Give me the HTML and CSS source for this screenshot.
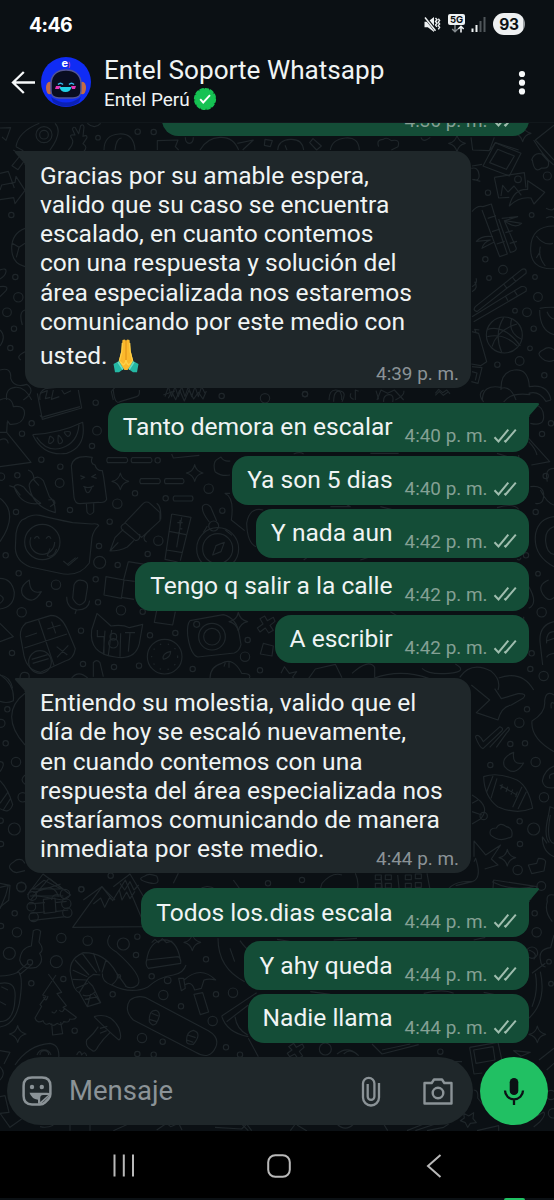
FILE: index.html
```html
<!DOCTYPE html>
<html lang="es">
<head>
<meta charset="utf-8">
<title>Entel Soporte Whatsapp</title>
<link rel="stylesheet" href="styles.css">
</head>
<body>
<svg class="defs" width="0" height="0">
  <symbol id="ticks" viewBox="0 0 24 16"><path d="M1.500 9.200l4 4.300L15.300 1.600M11.400 12.400l1.200 1.100L22.800 1.600" fill="none" stroke="#9fbdae" stroke-width="2"/></symbol>
  <symbol id="tail-out" viewBox="0 0 12 14"><path d="M0 0h9.500q2.500.3 1.200 2L1.500 12.500V14H0z" fill="#144d37"/></symbol>
  <symbol id="tail-in" viewBox="0 0 12 14"><path d="M12 0H2Q0 .3 1.200 2L10.500 12.500V14H12z" fill="#1f272a"/></symbol>
  <symbol id="spark" viewBox="-27 -27 54 54" overflow="visible"><path d="M0-25Q4-5 25 0Q5 4 0 25Q-5 5-25 0Q-4-4 0-25z"/></symbol>
</svg>
<div class="phone">
  <div class="status">
    <span class="clock">4:46</span>
    <div class="status-icons">
      <svg class="mute" width="18" height="18" viewBox="0 0 18 18"><path d="M1.500 5.700h3.300L11 1v15l-6.200-4.700H1.500z" fill="#eef1f2"/><path d="M2 1l12 15" stroke="#0b1014" stroke-width="3"/><path d="M2 1.500l10.500 13.200" stroke="#eef1f2" stroke-width="1.500"/><path d="M12.500 2l1.500 1.700-1.500 1.800L14 7.300l-1.500 1.800 1.500 1.800M15.300 2.700l1.300 1.700-1.300 1.800 1.300 1.700-1.300 1.700 1.300 1.700-1.300 2" fill="none" stroke="#eef1f2" stroke-width="1.400"/></svg>
      <div class="five-g"><span>5G</span><svg width="14" height="8" viewBox="0 0 14 8"><path d="M5 0v6.500M2.200 4L5 6.800 7.800 4" fill="none" stroke="#848a8e" stroke-width="1.400"/><path d="M11 7.500V1.300M8.300 4L11 1.300 13.700 4" fill="none" stroke="#eef1f2" stroke-width="1.600"/></svg></div>
      <svg class="signal" width="15" height="15" viewBox="0 0 15 15"><path d="M1.500 11.500V15M5.500 8v7" stroke="#eef1f2" stroke-width="2"/><path d="M9.500 4v11M13.500 0v15" stroke="#50565a" stroke-width="2"/></svg>
      <span class="battery">93</span>
    </div>
  </div>
  <header class="header">
    <svg class="back" width="25" height="25" viewBox="0 0 25 25"><path d="M24 12.500H2M12.800 2L2 12.500 12.800 23" fill="none" stroke="#f7f9fa" stroke-width="2.300"/></svg>
    <div class="avatar">
      <svg width="50" height="50" viewBox="0 0 50 50"><circle cx="25" cy="25" r="25" fill="#102cf5"/><path d="M10 40Q25 51 40 40L38 45Q25 54 12 45z" fill="#0b21b6"/><ellipse cx="8.500" cy="31" rx="3.500" ry="6.300" fill="#c46b45"/><ellipse cx="41.500" cy="31" rx="3.500" ry="6.300" fill="#c46b45"/><path d="M10 27C10 17 17 13 25 13s15 4 15 14v7c0 5-4 7-8 7H18c-4 0-8-2-8-7z" fill="#090d20" stroke="#535596" stroke-width="1.500"/><path d="M17 27.500q2.500-2.500 5 0M28 27.500q2.500-2.500 5 0" fill="none" stroke="#37b9e9" stroke-width="1.500"/><path d="M15 29h5l-2 3h-4zM30 29h5l-1 3h-3z" fill="#e435b5"/><path d="M18.500 30h12q-1 5-6 5t-6-5z" fill="#22d0e8"/></svg>
      <span class="brand">e<i>)</i></span>
    </div>
    <div class="who">
      <div class="name">Entel Soporte Whatsapp</div>
      <div class="sub">Entel Perú<svg width="24" height="24" viewBox="-12 -12 24 24"><circle r="10" fill="#16c253" /><circle r="10.100" fill="none" stroke="#16c253" stroke-width="2" stroke-dasharray="3.100 2.188" stroke-linecap="round"/><path d="M-4.800.2l3 3.300L5-3.900" fill="none" stroke="#fff" stroke-width="1.900"/></svg></div>
    </div>
    <svg class="more" width="8" height="26" viewBox="0 0 8 26" fill="#f7f9fa"><circle cx="4" cy="4" r="3.100"/><circle cx="4" cy="12.700" r="3.100"/><circle cx="4" cy="21.400" r="3.100"/></svg>
  </header>
  <main class="chat">
    <svg class="wallpaper" viewBox="0 123 554 1008" width="554" height="1008">
      <g transform="translate(0 0) scale(.33333)">
        <path d="M0 384l32-1-14 38-12-10M48 440Q55 395 118 370M48 440l22 12M165 370q25 25-15 80M205 450q20-22 10-35t10-10l-8-18q4-8 9-4l10 18 6-24q8-6 10 4l-3 28q12-6 12 4l-12 18q16 10 2 24M262 370q22 20 40 0M312 450q0-45 45-48t48 48M345 450q4-36 20-36M472 450v-28l62-2-8 20 10 10M600 450q20-36 60-38t56 38M712 430l48-10-32 30M795 418l22 4-6 18-18-4z"/>
        <circle cx="132" cy="404" r="24"/><circle cx="132" cy="404" r="13"/><circle cx="294" cy="413" r="7"/><circle cx="413" cy="395" r="8"/><circle cx="461" cy="396" r="8"/><path d="M556 412q0 18 12 18t12-18"/>
      </g>
      <g transform="translate(277 0) scale(.33333)">
        <path d="M2 450q2-30 38-32t40 32M160 450q5-32 45-36t42 36M30 450l-6-14M98 428l10-12 25 22-14 12zM305 440q-8-22 14-22 10-8 24 4 28-6 20 18l-20 10M432 412q6 18 28 0M582 412l5 38 50 2 15-40M640 450l15-22 70 22M775 420l56-44M775 420l56 60"/>
        <use href="#spark" x="513" y="403" width="54" height="54"/><use href="#spark" x="710" y="373" width="54" height="54"/>
      </g>
      <g transform="translate(0 140) scale(.33333)">
        <path d="M40 30l22 15-26 32 18 12 20-28M0 100l25-6 18 50M0 150l5-15 40-8 3-18 27 42-30 40-4-18-41 6M75 265q-40 15-40 60t40 55M37 310l20 12 18-12M57 322l-8 30M0 390q20-8 18 5t-18 22M0 440q28-4 18 12L0 470M75 510q-20 5-8 45M0 570q20 20 0 48M75 635q-30 15-12 25M0 690q35-10 32 25 10 30 48 18 30 20-10 47M20 780q-5-35 25-38t50 38M120 780q-4-25 15-34l50-5M340 780l-6-25 10-12M495 770l10-30 10 30 10-30 10 30 10-30 10 30 10-30 10 30 10-30 10 30 10-30 10 20"/>
        <circle cx="34" cy="225" r="8"/><circle cx="46" cy="411" r="8"/><circle cx="55" cy="472" r="14"/><circle cx="21" cy="517" r="13"/><circle cx="42" cy="566" r="8"/><circle cx="31" cy="624" r="8"/>
      </g>
      <g transform="translate(277 140) scale(.33333)">
        <path d="M655 8l77 32-35 68-79-30zM662 28l50 20-24 40-50-20zM652 112l90-14 5 45M652 112l13 62 32-2M672 168l5-32 16 20 18-18 22 28M697 198q12-52 55-50v-26l51 35-32 35-9-18q-35-5-65 24zM583 85q20-5 23 18t-20 15M590 118l20 6M770 0q30 50 60 75M764 60q8-24 30-18l20 22q5 24-20 20-22 18-28-24zM585 78l30-5M585 215q15-20 33-15l25-8q20 70 48 150l-23 8-53-140M632 235l25-8M645 275l24-8M659 312l24-8M674 235l48-5-38 12 50 8q-20 18-52-8l36 83q0 10-18 12l-35-100M685 278l22-6M698 310l22-6M648 290q-35-4-50 14l42-4q-20 6-25 25l38-20M807 205q20 10 24 0M807 234q20-8 24 0M831 258q-68 0-70 66t70 62M778 288q22 30 50 22M790 320q-8 30 15 58M778 354l12-20M595 500L735 388q15-5 12 12L600 515q-14-4-5-15M680 432l10 13M706 411l10 13M585 530L732 440q20-3 15 14L590 545M685 468l8 14M711 451l10 15M585 440q18-10 12-25M585 455q20-10 8-30M585 575l20 5 24 85-18 12-28-5M598 580l-5-12 14 2M585 680l30 3-12 47-20-5M585 695l15 4-5 22M788 505q20-4 43-3M788 510q0 62 43 74M810 515q8 20 21 22M795 655q-20-15 4-26 16-12 32 0M795 655q15 15 36 6M672 750q-2-55 40-60t45 50q55-10 65 40M672 742q-55-10-56 38M672 745q28-10 45 35"/>
        <circle cx="682" cy="585" r="54"/><path d="M632 568q50-15 98 50M645 620q15-50 75-68M680 532q-30 50-6 105M704 537q-12 40 28 60M631 590q50-12 90 28"/>
        <circle cx="723" cy="118" r="10"/><circle cx="633" cy="158" r="8"/><circle cx="811" cy="108" r="12"/><circle cx="764" cy="225" r="7"/><circle cx="625" cy="358" r="8"/><circle cx="678" cy="389" r="13"/><circle cx="636" cy="414" r="7"/><circle cx="774" cy="411" r="7"/><circle cx="783" cy="471" r="13"/><circle cx="714" cy="512" r="7"/><circle cx="750" cy="517" r="13"/><circle cx="770" cy="566" r="8"/><circle cx="759" cy="625" r="7"/><circle cx="728" cy="663" r="13"/><circle cx="661" cy="674" r="8"/><circle cx="802" cy="706" r="8"/><circle cx="84" cy="762" r="8"/>
        <path d="M156 780q0-30 20-30t18 30M235 780v-30l10 4M300 780l12-30 20 10 20-10 28 30M475 760l10-12 12 10 12-8 10 12"/>
      </g>
      <g transform="translate(0 390) scale(.33333)">
        <path d="M0 30q35-15 40 20 38-5 33 25-5 30-43 28L22 92M22 95l-2 32L93 217 0 230M0 127h20M0 150q20-10 25 10M112 10l15 78 118-34-10-54M120 76q5 8 12 4l108-30M120 10l22-8-6 24 15-4M160 0l-6 28 24-8M185 0l8 12 20-10M340 0q4 45 20 35l50-15q10-2 8-20M490 15q20-8 35-12M505 25l10-20 12 24 12-28 14 32 14-32 14 26 14-20 14 20 10-24M98 134Q180 130 248 97 260 170 200 190 130 200 98 134M110 142q30 45 75 32 48-15 52-70"/>
        <path d="M150 138q20 10 5 20t-5-20M175 135q20 18 8 25t-8-25M192 126q25-5 18 8t-18-8M222 322l-8-95q5-28 45-27l18 2q-8 18 8 23 5 18 22 17l4 20 9 66q-5 12-25 9l-55 4q-15 0-18-19zM241 257l13 5-12 6M288 253l-13 7 15 5M250 289q15 8 32-2M254 291q8 35 22-1M259 340l2 26q8 15 20 0v-28M323 203h56q8 8 0 15h-56q-5-7 0-15M396 203h56q8 8 0 15h-56q-5-7 0-15M422 266h55q8 8 0 15h-55q-5-7 0-15M496 266h52q8 8 0 15h-52q-5-7 0-15M522 318h54q6 7 0 15h-54q-5-7 0-15M42 290q20 60 80 50-38-30-50-48-20-15-30-2M28 287l15 5 18 24M88 290q10 60 78 78 0-35-18-48l-18-48q-15-18-30-5t-12 23M84 240q18 5 18 30l15 17M145 330q20-5 20 10l-15 10"/>
        <path d="M0 325q58 45 0 130M75 386Q55 390 48 430l-2 45q2 40 45 56l85 18q60 15 92-30l8-77q5-22 20-35-3-8-20-5l-58-4Q160 386 120 376q-26-4-45 10z"/><circle cx="127" cy="456" r="53"/><circle cx="127" cy="456" r="37" stroke-dasharray="130 102"/><path d="M103 446q9-14 15 0M138 446q9-14 15 0M150 475l-8 22q18 8 28-20M190 513l12 10 25-20M202 524l4 2 28-24"/>
        <path d="M375 398l55-58q10-8 20 0l30 28v24l-55 50zM375 400q-18 8-8 20l40 32q15-2 12-20M370 418l-25 25-15 40q30 0 52-12l20-20M330 483l25-26M470 340q15 10 12 48M450 420q-30 25-10 36M515 372l58 10-32 130M515 372l-20 136 38 8M508 424l50 10M500 480l48 8M545 382l-15 90M540 390v22q0 6 7 4M532 398h16"/>
        <circle cx="641" cy="408" r="15"/><circle cx="653" cy="476" r="63"/><circle cx="653" cy="476" r="45"/><path d="M628 396q-25-30-20-48 10-12 24 3l18 42M638 495l10-28 25-10-10 28zM610 428l12-20M676 420l20 16M645 245q-8-30 8-38l10-6q8 15 28 12M645 245q20 15 45 10M674 310q30 12 20 80l40 32M690 310l-16 0M790 360q-42-10-50 40 2 60 28 70M515 192l5 12 78-8"/>
        <path d="M0 565q35 0 43 42 0 45-43 50M0 615q20 12 0 25M88 570q-32 20-20 45 30 35 56-10-35 10-36-35zM218 625l4-40q8-20 28-13 15 5 12 22l-6 38q-20 28-38-7M200 620q0 35 32 40 34 0 37-28M229 660l-4 12M318 560l54 10-8 55-52-10zM385 515l50 8M385 515l-14 54M364 622l38 6M372 570l32 4M470 662l-7 35 55 8 8-40M75 700l78-24q30 0 48 40l25 60q-5 32-30 37l-74 34q-40-5-50-50l-11-60q0-25 17-37zM116 690l46 136M73 774l128-42M76 741l35-12M142 717l40-12M155 695l12 35M170 770l32 25M205 766l-34 36M95 808l48-14M98 820l48-14"/><circle cx="120" cy="816" r="34"/>
        <path d="M275 720l16-50 42 38q35-5 55 5l40-10-10 58q-12 50-72 40-80-10-71-81M292 720v20h20v55M315 722l-5 70M335 720l-10 75M362 730l-2 70M390 730l-5 55M375 728h30"/><circle cx="340" cy="740" r="10"/><circle cx="340" cy="760" r="14"/><circle cx="494" cy="800" r="52"/><circle cx="494" cy="800" r="39" stroke-dasharray="4 20"/><path d="M490 808q-5-18 22-24 0 20-22 24M280 860v-42q10-12 20 0l10 42M570 692l100-18q40 10 48 60l5 30q-5 20-20 25l-110 12q-22-8-30-65-3-32 7-44"/><circle cx="636" cy="740" r="40"/><circle cx="636" cy="740" r="25"/><circle cx="590" cy="703" r="9"/><path d="M630 865q0-35 35-45 35-20 60 30 35 0 20 20M672 830l4-12M687 833V813M780 686l14-8 8 14 18-10 5 12-15 12 10 15-14 8-10-15-16 12-8-12 17-12zM790 760l30 8-4 30-35-6z"/>
        <path d="M0 700l40 40-40 15M0 855q30 4 38 40M60 864q0-18 15-17t12 17M215 864q20-25 48 0"/>
        <use href="#spark" x="334" y="247" width="54" height="54"/><use href="#spark" x="557" y="222" width="54" height="54"/><use href="#spark" x="685" y="665" width="60" height="60"/>
        <g><circle cx="287" cy="38" r="8"/><circle cx="95" cy="100" r="8"/><circle cx="66" cy="131" r="8"/><circle cx="291" cy="122" r="13"/><circle cx="276" cy="168" r="8"/><circle cx="124" cy="209" r="8"/><circle cx="181" cy="230" r="8"/><circle cx="179" cy="279" r="13"/><circle cx="52" cy="256" r="8"/><circle cx="3" cy="260" r="11"/><circle cx="473" cy="211" r="8"/><circle cx="405" cy="310" r="8"/><circle cx="497" cy="325" r="8"/><circle cx="626" cy="296" r="14"/><circle cx="352" cy="341" r="14"/><circle cx="210" cy="360" r="8"/><circle cx="329" cy="395" r="8"/><circle cx="48" cy="366" r="8"/><circle cx="667" cy="362" r="8"/><circle cx="475" cy="452" r="14"/><circle cx="443" cy="492" r="8"/><circle cx="297" cy="468" r="8"/><circle cx="299" cy="517" r="18"/><circle cx="353" cy="525" r="8"/><circle cx="17" cy="496" r="8"/><circle cx="56" cy="550" r="8"/><circle cx="168" cy="584" r="14"/><circle cx="287" cy="568" r="8"/><circle cx="147" cy="642" r="8"/><circle cx="294" cy="637" r="8"/><circle cx="65" cy="667" r="14"/><circle cx="363" cy="661" r="14"/><circle cx="428" cy="665" r="8"/><circle cx="243" cy="722" r="8"/><circle cx="450" cy="736" r="8"/><circle cx="526" cy="729" r="8"/><circle cx="36" cy="789" r="8"/><circle cx="249" cy="822" r="8"/><circle cx="342" cy="831" r="8"/><circle cx="417" cy="827" r="8"/><circle cx="578" cy="837" r="8"/><circle cx="735" cy="800" r="14"/><circle cx="743" cy="750" r="8"/><circle cx="780" cy="841" r="8"/><circle cx="795" cy="25" r="14"/><circle cx="665" cy="18" r="8"/></g>
      </g>
      <g transform="translate(277 390) scale(.33333)">
        <path d="M170 35q0-35 20-32t5 32M230 28q-15-5-8-18M305 28l-8-26M320 36q-2-20 15-22t12 22M355 30q30-15 25-28M475 16l12-12 12 12 14-10M620 36q-20-25 0-36M680 36q20-30 80-22M755 10q30-10 52 24l15-4M760 100q40 10 40-20t-25-35M755 145l63 70-55 10M755 155q20 20 25 40M831 235q-30 0-20 40M760 290q40-5 40 25t-25 25M790 300q20 40 41 45M831 380q-45 5-55 50-10 65 55 100M831 410q-28 10-25 45t25 38M815 570q-35 15-18 42t34 10M755 590q30 50 0 65M831 695q-45 10-42 60l8 70M831 725q-25 0-22 35M831 745l-22 8M831 790q-20 3-22 12M12 850l10-20 15 20 22-5-12 16 18 20M95 865l20-28 60-14 20 40M225 850q50-45 68-18v30M290 865q80-30 165 0M435 835q20 20 80 15t20-28M548 862q35-50 95-18 30 25 20 56M665 864q70-25 105 36"/><path d="M50 192q18-8 30 0M280 190h85M660 190l65 20v-15M160 350h60l-20-12M310 350l60 15M660 353q50-15 65 5M80 510l20-15M250 510l30-10M720 508q10 5 12-5M740 680v20M340 665l20 12"/>
        <circle cx="84" cy="13" r="8"/><circle cx="795" cy="132" r="8"/><circle cx="822" cy="100" r="8"/><circle cx="806" cy="258" r="8"/><circle cx="776" cy="366" r="8"/><circle cx="783" cy="551" r="7"/><circle cx="794" cy="667" r="14"/><circle cx="764" cy="790" r="8"/><circle cx="760" cy="837" r="8"/><circle cx="800" cy="858" r="14"/><circle cx="747" cy="496" r="8"/>
      </g>
      <g transform="translate(0 670) scale(.33333)">
        <path d="M0 14q45 30 40 78-20 10-40 2M75 70q-40 30-40 70t40 85M0 275q20 0 0 30M75 315q-18 15 0 28M0 332q25 25 38 72-10 30-38 12M25 365L0 400M32 385l-22 35M75 580l-8-10q-15-5-25 5-18 10-12 20t20 13l25-6M0 640l30 6-4 45-26 20M92 690l55-65 65 50-25 15-90-15M100 668l82-26M115 660q50-20 60 20M155 690q0-20 25-15M250 690l55-40 40 40M340 650l50-38 45 75M360 640l14 20 16-25 12 25 14-15M435 618q10-10 35 0 15 30-25 20t-10-20M520 640l15-30M570 690q50-80 105-2M700 630l40 55"/>
        <circle cx="22" cy="118" r="8"/><circle cx="3" cy="160" r="12"/><circle cx="17" cy="220" r="8"/><circle cx="48" cy="276" r="14"/><circle cx="68" cy="382" r="14"/><circle cx="2" cy="452" r="8"/><circle cx="43" cy="477" r="18"/><circle cx="3" cy="522" r="8"/><circle cx="64" cy="652" r="14"/><circle cx="244" cy="658" r="8"/><circle cx="332" cy="617" r="8"/><circle cx="804" cy="640" r="8"/>
      </g>
      <g transform="translate(277 670) scale(.33333)">
        <path d="M583 45l55 45-40 38 65 22q10-40 40-45l35-20q15-15-15-14l-50 15-20-30M595 200q10-12 24 15l50-45q12 5 5 13l-56 53q-10-2-23-36M638 232l55-60q10 4-5 18l-30 42M831 75q-25-15-28 18 4 35-38 60-5 52 66 92M831 100q-12-8-8 15M710 247q-38 15-28 42 30 35 58-10-36 8-30-32zM620 320q42-15 100 10 35 20 47 85-50 20-105-5-40-30-42-90zM648 318l-20 50M660 325l-18 60M735 350l-28 62M748 365l-25 52M668 345l52 30M676 342l-5 16M692 350l-5 16M707 358l-5 16M721 365l-5 16M831 288q-30 12-35 45 5 25 35 20M831 310q-18 3-12 16M585 375q60 35 25 72l-25 15M585 425l30 10M585 400l18-10M640 494q-5-20 18-20 10-20 30-4 22 5 16 30-38 20-64-6M831 415l-12-5-5 28q-15 60 3 80M820 435q-15 80 11 85M796 500q0 45 35 60M796 500l14 20M754 585l25-5 5-15q20 0 22 10l-5 28-37 8zM591 575l5-10q20 60-10 70l-50 12M591 560v-47l35 42 45-30-28 42 20 18-40 12M370 690l-8-75M320 690l-8-70M120 690l15-50q30-35 60-25M235 610q20 45-10 80M450 610l15 80M500 690q10-60 85-55M645 690l5-60 130 20-20 40M645 635q60 30 125 15"/>
        <path d="M295 615h18v14h-18zM325 615h18v14h-18zM295 640h18v14h-18zM325 640h18v14h-18zM385 615h18v14h-18zM415 612h18v14h-18zM385 640h18v14h-18zM415 638h18v14h-18z"/>
        <use href="#spark" x="664" y="536" width="54" height="54"/><circle cx="620" cy="438" r="11"/><circle cx="750" cy="118" r="8"/><circle cx="727" cy="158" r="14"/><circle cx="700" cy="222" r="8"/><circle cx="744" cy="220" r="8"/><circle cx="640" cy="285" r="8"/><circle cx="776" cy="276" r="14"/><circle cx="801" cy="382" r="14"/><circle cx="728" cy="454" r="8"/><circle cx="770" cy="477" r="18"/><circle cx="729" cy="522" r="8"/><circle cx="722" cy="600" r="14"/><circle cx="793" cy="648" r="13"/><circle cx="75" cy="630" r="8"/>
      </g>
      <g transform="translate(0 880) scale(.33333)">
        <path d="M0 22l25-6-8 30-17 40M82 45l12-18h95l-60-45-47 63M100 26l32-25 50 25M90 48h100M85 72l50-4M90 100l45-4M165 68l35-4M165 95l40-5M130 58l35-4 3 42-36 4zM92 122l105-12M218 142L306 20l32 42 38-62 60 140zM280 72l22-18 12 28 14-28 10 6M358 30l8 30 14-24 10 20 15-22M100 152q15-8 22 2l-5 32q18 24 2 34 15 25-10 42-42 10-50-22 5-38 35-42z"/><circle cx="90" cy="247" r="8"/><path d="M0 288q30 0 56-12 15 15 2 95-15 65-58 70M50 278l35-30M58 285l38-32M0 310q50-10 45 45-2 70-45 70M4 320l20 10M0 365l18 10M145 282l40 55-14 4 28 36-10 5 40 30q-5 8-20 5 0 12-18 8-5 15-20 5-12 12-22 0-15 8-20-8-18 10-24-8l20-35-5-5 18-25-10-4 40-60M155 430l3 35 30-4-6-35M130 350q8 20 14-2M155 395q10 10 15-5M178 390q10 12 15-4"/>
        <path d="M216 300q-20-60 35-82 65 0 98 60l30 42M216 300q5 30 22 38M245 218l45 60M225 240l42 45M218 270l44 20M218 298l42 2M228 325l36-15M280 219l20 55M318 240l-12 38M350 280q10 15-15 35-30-10-28-35M238 338l28-45 15-10 20 2M238 338l24 42 40-12-24-50-14-14M248 345q20 8 38-10M254 358l40-8M262 380l10-38M300 366l-18-24M330 165q-20 30 18 50 85 75 65 100-18 15-38 3M335 315q60 30 110 5 30-28 75-35 30-5 38-30"/><circle cx="357" cy="289" r="5"/>
        <path d="M440 240q8-55 48-60t52 54M440 240q-5 15 5 25l97-15q2-15-7-20zM455 188l10-10 10 10 12-12 12 12 18-5M536 295h15l5 30-12 7zM552 300q50-45 95 0-20-5-35 0l-8 25-20 5q-10-30-30-15M582 343l26-5 18 58-25 8zM282 410q50-15 75 35 10 30 0 35-20-15-75-70M295 440q-12 20-35 40-5 20 15 30 10 10 20-12 15-22 35-40M300 445l22-6M300 460l20-8M390 360q20-15 45-8l190 100q35 20 22 50-18 40-60 15L400 420q-30-30-10-60M448 425q-2-35 20-34 20 8 0 40-10 10-20-6M455 400l20 8M448 418l22 7M560 485q-2-30 20-34 28 8 0 42-20 0-20-8M563 465l24 8M560 480l20 7M654 175q0 90 80 130M720 182q35 50 40 12M690 205l14 40M665 408l105-70M665 408q15 50 80 62M680 425l65-50M705 410q5 38 38 55M745 475l30 55"/>
        <path d="M0 512l30 5-18 35M0 560q20 20 0 40M45 555q40-60 105-65 35 5 24 60M111 525a22 22 0 0142 0M120 525a13 13 0 0126 0M230 525q10-20 15 0 10-15 15 3M0 650l15-3 12 50L0 700M0 700l30 42 35-25M120 740q20 5 40-4M210 732v20M270 732v20M470 750l30-20 12 10 24-10 10 20M645 742l80 5 15-15 15 20M725 732l20 20M340 752l45-20"/>
        <use href="#spark" x="26" y="435" width="54" height="54"/><use href="#spark" x="550" y="160" width="54" height="54"/>
        <circle cx="97" cy="48" r="13"/><circle cx="94" cy="80" r="13"/><circle cx="101" cy="111" r="14"/><circle cx="195" cy="42" r="14"/><circle cx="199" cy="71" r="14"/><circle cx="202" cy="98" r="14"/><circle cx="64" cy="20" r="14"/><circle cx="244" cy="28" r="8"/><circle cx="44" cy="100" r="8"/><circle cx="3" cy="138" r="8"/><circle cx="51" cy="157" r="14"/><circle cx="184" cy="174" r="14"/><circle cx="263" cy="182" r="14"/><circle cx="370" cy="192" r="18"/><circle cx="412" cy="170" r="8"/><circle cx="28" cy="220" r="18"/><circle cx="169" cy="245" r="18"/><circle cx="94" cy="310" r="8"/><circle cx="190" cy="297" r="8"/><circle cx="338" cy="343" r="8"/><circle cx="408" cy="225" r="8"/><circle cx="455" cy="289" r="8"/><circle cx="503" cy="301" r="10"/><circle cx="490" cy="345" r="14"/><circle cx="543" cy="379" r="8"/><circle cx="618" cy="238" r="8"/><circle cx="648" cy="343" r="8"/><circle cx="699" cy="338" r="14"/><circle cx="638" cy="423" r="14"/><circle cx="224" cy="452" r="8"/><circle cx="426" cy="474" r="14"/><circle cx="488" cy="485" r="8"/><circle cx="412" cy="522" r="8"/><circle cx="461" cy="524" r="8"/><circle cx="678" cy="502" r="8"/><circle cx="720" cy="524" r="8"/>
      </g>
      <g transform="translate(277 880) scale(.33333)">
        <path d="M831 45q-25-5-20 20-10 30 15 60M831 165l-10 38q-40 5-30 40 0 15 15 18M765 280l40-30M790 275q20 90-35 140M775 280q10 50-10 100M755 210q30 10 15 28M35 500l15-10 8 12 18-10 5 10-14 12 10 14-14 8-10-14-15 8-7-10 14-10zM285 492l30 30 110-28M315 510l85-18M200 522q20-20 45 5M180 522q30-25 60 0M578 502l85-15 12 55M578 502l13 80 25-3M590 510l58-10 6 40-57 10zM530 545l25 0M710 512l50 5-28 12zM831 505l-45 35M831 550l-22 20M590 630q15 0 12 24l20 25M560 700l15 8 15-10-2 18 10 12-18 2-8 12-7-14-15-6 12-8zM760 720l40-24q8 8-12 30l-18 15M40 752l15-20M60 735l30 18M180 732q25 25 50 0M320 732l12 20M390 752l50-20M415 752l60-20M450 752l50-10 15-10M600 752l65-15v15M0 178l50 8M170 180l70-5M590 180l35-8M100 335l60 8M440 340q60-15 90 0M620 337l40 8"/>
        <use href="#spark" x="754" y="436" width="54" height="54"/><circle cx="145" cy="507" r="18"/><circle cx="490" cy="515" r="8"/><circle cx="773" cy="100" r="8"/><circle cx="779" cy="157" r="14"/><circle cx="816" cy="245" r="7"/><circle cx="822" cy="311" r="7"/><circle cx="765" cy="218" r="17"/><circle cx="822" cy="645" r="14"/><circle cx="828" cy="700" r="14"/>
      </g>
    </svg>
    <div class="messages">
      <div class="bubble out clipped"><span class="time">4:36 p. m.</span><svg class="ticks" width="24" height="16"><use href="#ticks"/></svg></div>
      <div class="bubble in first"><svg class="tail" width="12" height="14"><use href="#tail-in"/></svg><p>Gracias por su amable espera,<br>valido que su caso se encuentra<br>escalado, en cuanto contemos<br>con una respuesta y solución del<br>área especializada nos estaremos<br>comunicando por este medio con<br><span class="last">usted. <svg class="pray" width="26" height="34" viewBox="0 0 26 34" role="img" aria-label="🙏"><path d="M9.500 1q3-1.500 3.500 1 .5-2.500 3.500-1l1 10 3 12.500-6 7.500h-3l-6-7.500L8.500 11z" fill="#fbb92c"/><path d="M13 2v19" stroke="#d98513" stroke-width=".8"/><path d="M9.300 4L8.800 13l-2.500 9 4 4q3-2 2.500-5M16.700 4l.5 9 2.500 9-4 4q-3-2-2.500-5" fill="none" stroke="#ffd149" stroke-width="1.200"/><path d="M.5 25l5.500-3 4.500 8L6 33.300H2zM25.500 25L20 22l-4.500 8 4.500 3.300h4z" fill="#25b8a4"/><path d="M5 23l5 7.500M21 23l-5 7.500" stroke="#6bdcc2" stroke-width="1.500"/></svg></span></p><span class="time">4:39 p. m.</span></div>
      <div class="bubble out lead"><svg class="tail" width="12" height="14"><use href="#tail-out"/></svg><p>Tanto demora en escalar</p><span class="time">4:40 p. m.</span><svg class="ticks" width="24" height="16"><use href="#ticks"/></svg></div>
      <div class="bubble out"><p>Ya son 5 dias</p><span class="time">4:40 p. m.</span><svg class="ticks" width="24" height="16"><use href="#ticks"/></svg></div>
      <div class="bubble out"><p>Y nada aun</p><span class="time">4:42 p. m.</span><svg class="ticks" width="24" height="16"><use href="#ticks"/></svg></div>
      <div class="bubble out"><p>Tengo q salir a la calle</p><span class="time">4:42 p. m.</span><svg class="ticks" width="24" height="16"><use href="#ticks"/></svg></div>
      <div class="bubble out"><p>A escribir</p><span class="time">4:42 p. m.</span><svg class="ticks" width="24" height="16"><use href="#ticks"/></svg></div>
      <div class="bubble in second"><svg class="tail" width="12" height="14"><use href="#tail-in"/></svg><p>Entiendo su molestia, valido que el<br>día de hoy se escaló nuevamente,<br>en cuando contemos con una<br>respuesta del área especializada nos<br>estaríamos comunicando de manera<br>inmediata por este medio.</p><span class="time">4:44 p. m.</span></div>
      <div class="bubble out lead"><svg class="tail" width="12" height="14"><use href="#tail-out"/></svg><p>Todos los.dias escala</p><span class="time">4:44 p. m.</span><svg class="ticks" width="24" height="16"><use href="#ticks"/></svg></div>
      <div class="bubble out"><p>Y ahy queda</p><span class="time">4:44 p. m.</span><svg class="ticks" width="24" height="16"><use href="#ticks"/></svg></div>
      <div class="bubble out"><p>Nadie llama</p><span class="time">4:44 p. m.</span><svg class="ticks" width="24" height="16"><use href="#ticks"/></svg></div>
    </div>
    <div class="composer">
      <div class="field">
        <svg width="30" height="30" viewBox="0 0 30 30"><path d="M10 1.600h10q8.400 0 8.400 8.400v8q0 3-2 5l-3.500 3.500q-2 1.900-5 1.900H10Q1.600 28.400 1.600 20V10q0-8.400 8.400-8.400z" fill="none" stroke="#8b9397" stroke-width="2.500"/><circle cx="10" cy="11" r="2.200" fill="#8b9397"/><circle cx="19.800" cy="11" r="2.200" fill="#8b9397"/><path d="M7.500 16.800h16q5-.2 5 1l-3 4-6.500 6h-3v-4q-6.500-1-8.500-7z" fill="#8b9397"/><path d="M18.200 26v-4q0-3 3-3h5l-8 7z" fill="#1f272a"/></svg>
        <span class="placeholder">Mensaje</span>
        <svg width="20" height="31" viewBox="0 0 20 31"><path d="M18 7v14.500a8 8 0 01-16 0V7.500a5.700 5.700 0 0111.400 0v13a3.300 3.300 0 01-6.700 0V8" fill="none" stroke="#8b9397" stroke-width="2.300"/></svg>
        <svg class="camera" width="30" height="27" viewBox="0 0 30 27"><path d="M1.500 5h7.200l2.300-3.500h8L21.300 5h7.200v20.500h-27z" fill="none" stroke="#8b9397" stroke-width="2.400" stroke-linejoin="round"/><circle cx="15" cy="15" r="5.300" fill="none" stroke="#8b9397" stroke-width="2.400"/></svg>
      </div>
      <div class="mic"><svg width="22" height="29" viewBox="0 0 22 29"><rect x="6.700" y="1" width="8.600" height="17" rx="4.300" fill="#0b1014"/><path d="M2 13.500a9 8.800 0 0018 0M11 22v6" fill="none" stroke="#0b1014" stroke-width="2.300"/></svg></div>
    </div>
  </main>
  <nav class="nav">
    <svg width="22" height="23" viewBox="0 0 22 23"><path d="M1.500 .5v22M10.800 .5v22M20 .5v22" stroke="#b9b9b9" stroke-width="2"/></svg>
    <svg class="home" width="24" height="24" viewBox="0 0 24 24"><rect x="1.200" y="1.200" width="21.600" height="21.600" rx="7" fill="none" stroke="#b9b9b9" stroke-width="2"/></svg>
    <svg width="16" height="24" viewBox="0 0 16 24"><path d="M14.500 1L2 12l12.500 11" fill="none" stroke="#b9b9b9" stroke-width="2"/></svg>
  </nav>
  <div class="edge"><span></span></div>
</div>
</body>
</html>
```

FILE: styles.css
```css
* { box-sizing: border-box; }
body { margin: 0; background: #0b1014; font-family: Roboto, sans-serif; color: #f0f4f4; }
svg { display: block; flex: none; }
p { margin: 0; }
.defs { position: absolute; }
.phone { width: 554px; height: 1200px; display: flex; flex-direction: column; overflow: hidden; }

.status { height: 50px; display: flex; justify-content: space-between; padding: 13px 28px 0 29px; }
.clock { font: 700 19.500px/25px Inter, sans-serif; letter-spacing: -.6px; color: #fff; }
.status-icons { display: flex; align-items: flex-start; }
.mute { margin: 3px 7px 0 0; }
.five-g { width: 17px; margin: 1px 6px 0 0; display: flex; flex-direction: column; align-items: center; }
.five-g span { width: 17px; height: 11px; border-radius: 2px; background: #eef1f2; color: #0b1014; font: 700 9.5px/11px Inter, sans-serif; text-align: center; }
.signal { margin: 4px 7px 0 0; }
.battery { width: 32px; height: 22px; margin-right: 1px; border-radius: 11px; background: linear-gradient(90deg, #eef0f1 93%, #9a9fa2 93%); color: #0b1014; font: 700 15.500px/23px Inter, sans-serif; letter-spacing: -.3px; text-align: center; }

.header { height: 73px; display: flex; padding: 0 28px 0 11px; border-bottom: 1px solid #11171b; }
.back { margin: 20px 5px 0 0; }
.avatar { position: relative; width: 50px; height: 50px; margin: 7px 13px 0 0; }
.brand { position: absolute; left: 20.500px; top: 0; font: 700 11px/12px Inter, sans-serif; color: #fff; }
.brand i { font-style: normal; font-weight: 400; font-size: 7px; color: #ee5555; }
.who { flex: 1; white-space: nowrap; }
.name { font-size: 26.150px; line-height: 32px; margin-top: 4px; }
.sub { display: flex; align-items: center; font-size: 19px; line-height: 23px; height: 24px; margin-top: 1px; }
.sub svg { margin-left: 3px; }
.more { margin: 20px 0 0; }

.chat { position: relative; height: 1008px; overflow: hidden; display: flex; flex-direction: column; }
.wallpaper { position: absolute; inset: 0; fill: none; stroke: #1f262a; stroke-width: 3.500; stroke-linejoin: round; }
.messages { position: relative; height: 934px; padding: 0 25px; display: flex; flex-direction: column; align-items: flex-start; }
.bubble { position: relative; flex: none; display: flex; border-radius: 16px; font-size: 24.550px; line-height: 29.300px; white-space: nowrap; }
.out { align-self: flex-end; height: 48.900px; margin-bottom: 4px; padding: 9.200px 12px 0 15px; background: #144d37; }
.out .time { margin: 12.200px 0 0 12px; color: #84a094; }
.ticks { margin: 15.500px 0 0 5.500px; }
.time { font-size: 18.900px; line-height: 23px; color: #8b9397; }
.clipped { width: 367px; margin: -35.700px 0 14.800px; justify-content: flex-end; }
.in { width: 446px; padding: 9.500px 12px 0 15px; flex-direction: column; background: #1f272a; }
.in .time { position: absolute; right: 12px; bottom: 3px; }
.first { height: 237px; margin-bottom: 15px; border-top-left-radius: 0; }
.second { height: 195px; margin: 11px 0 15px; border-top-left-radius: 0; }
.lead { border-top-right-radius: 0; }
.tail { position: absolute; top: 0; }
.in .tail { left: -11px; }
.out .tail { right: -11px; }
.last { display: flex; align-items: flex-start; height: 36px; padding-top: 5px; }
.pray { margin: -2px 0 0 5px; }

.composer { position: relative; display: flex; justify-content: space-between; padding: 0 6px 0 7px; }
.field { width: 466px; height: 68px; border-radius: 34px; background: #1f272a; display: flex; align-items: center; padding: 0 20px 0 15px; }
.placeholder { flex: 1; margin-left: 17px; font-size: 27.500px; line-height: 32px; color: #8b9397; }
.camera { margin-left: 42px; }
.mic { width: 68px; height: 68px; border-radius: 50%; background: #21c063; display: flex; align-items: center; justify-content: center; }

.nav { height: 66.500px; background: #000; display: flex; align-items: center; justify-content: space-between; padding: 3px 112px 0 113px; }
.home { margin-right: 4px; }
.edge { flex: 1; padding-left: 504px; }
.edge span { display: block; width: 21px; height: 2px; border-radius: 10px 10px 0 0; background: #21c063; }
```
